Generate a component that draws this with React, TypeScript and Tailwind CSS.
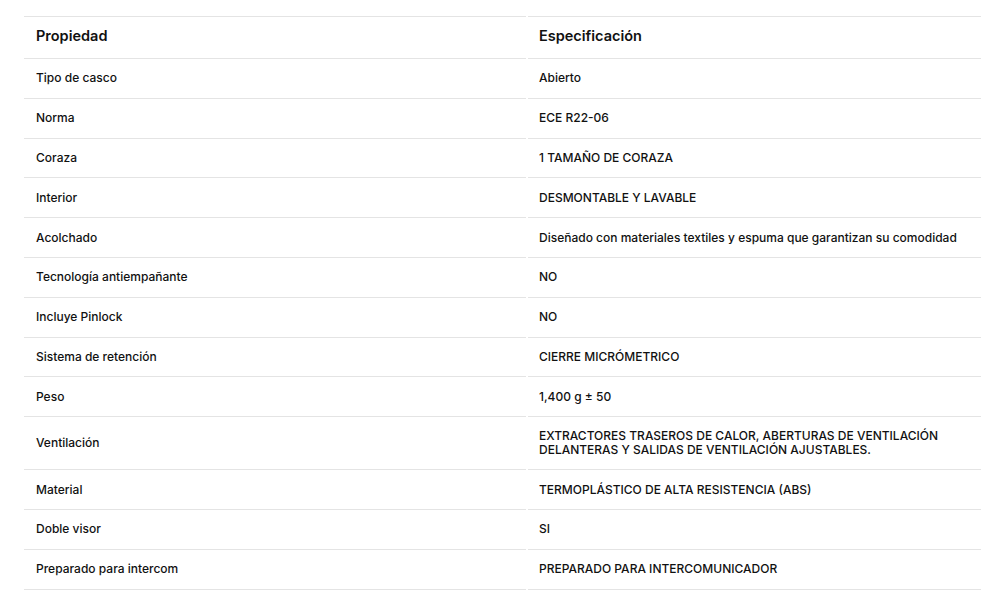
import React from "react";

const rows: [string, string][] = [
  ["Tipo de casco", "Abierto"],
  ["Norma", "ECE R22-06"],
  ["Coraza", "1 TAMAÑO DE CORAZA"],
  ["Interior", "DESMONTABLE Y LAVABLE"],
  ["Acolchado", "Diseñado con materiales textiles y espuma que garantizan su comodidad"],
  ["Tecnología antiempañante", "NO"],
  ["Incluye Pinlock", "NO"],
  ["Sistema de retención", "CIERRE MICRÓMETRICO"],
  ["Peso", "1,400 g ± 50"],
  [
    "Ventilación",
    "EXTRACTORES TRASEROS DE CALOR, ABERTURAS DE VENTILACIÓN DELANTERAS Y SALIDAS DE VENTILACIÓN AJUSTABLES.",
  ],
  ["Material", "TERMOPLÁSTICO DE ALTA RESISTENCIA (ABS)"],
  ["Doble visor", "SI"],
  ["Preparado para intercom", "PREPARADO PARA INTERCOMUNICADOR"],
];

export default function App() {
  return (
    <div
      className="w-[981px] h-[598px] overflow-hidden bg-white text-[#111]"
      style={{ fontFamily: "Inter, 'Noto Sans', sans-serif" }}
    >
      <div className="pt-4 pl-6">
        <table className="w-[962px] border-separate border-spacing-x-[2px] border-spacing-y-0 -ml-[2px] table-fixed">
          <colgroup>
            <col className="w-[502px]" />
            <col />
          </colgroup>
          <thead>
            <tr>
              <th className="h-[43px] border-y border-[#e4e4e4] px-3 pb-[4px] text-left text-[14.5px] font-semibold align-middle">
                Propiedad
              </th>
              <th className="h-[43px] border-y border-[#e4e4e4] pl-[11px] pr-3 pb-[4px] text-left text-[14.5px] font-semibold align-middle">
                Especificación
              </th>
            </tr>
          </thead>
          <tbody>
            {rows.map(([k, v]) => (
              <tr key={k}>
                <td className="h-[39.8px] border-b border-[#e4e4e4] px-3 py-[12px] text-[12px] font-medium leading-[14px] align-middle">
                  {k}
                </td>
                <td className="h-[39.8px] border-b border-[#e4e4e4] pl-[11px] pr-5 py-[12px] text-[12px] font-medium leading-[14px] align-middle">
                  {v}
                </td>
              </tr>
            ))}
          </tbody>
        </table>
      </div>
    </div>
  );
}
